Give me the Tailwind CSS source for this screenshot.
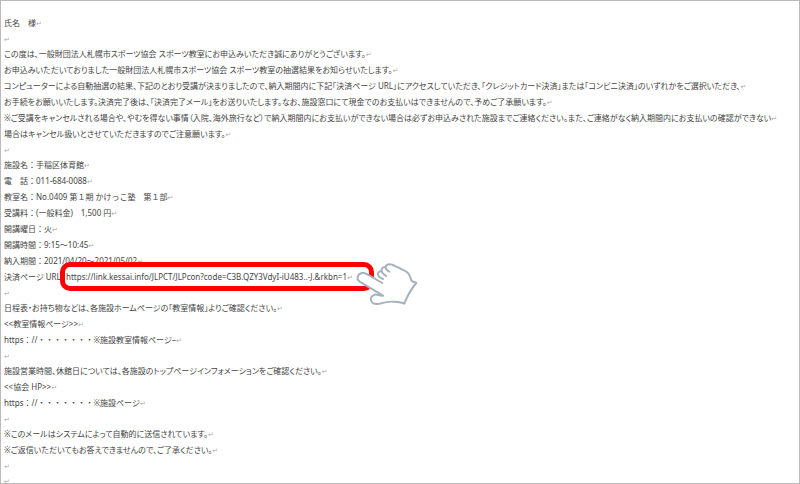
<!DOCTYPE html>
<html lang="ja">
<head>
    <meta charset="UTF-8">
    <meta name="viewport" content="width=device-width, initial-scale=1.0">
    <title>抽選結果のお知らせ</title>
    <script src="https://cdn.jsdelivr.net/npm/@tailwindcss/browser@4"></script>
</head>
<body class="bg-white">
    <main class="h-screen overflow-hidden border border-[#bbbbbb] pt-[14px] pl-[3px] whitespace-nowrap font-['Noto_Sans','Noto_Sans_CJK_JP',sans-serif] [font-feature-settings:'palt'] text-[8px] leading-4 text-[#444444] [&_i]:text-[7px] [&_i]:leading-none [&_i]:not-italic [&_i]:text-[#aaaaaa] [&_i]:font-['DejaVu_Sans',sans-serif]">
        <p class="h-4">氏名　様<i>↵</i></p>
        <p class="h-[15px]"><i>↵</i></p>

        <p class="h-4">この度は、一般財団法人札幌市スポーツ協会 スポーツ教室にお申込みいただき誠にありがとうございます。<i>↵</i></p>
        <p class="h-4">お申込みいただいておりました一般財団法人札幌市スポーツ協会 スポーツ教室の抽選結果をお知らせいたします。<i>↵</i></p>
        <p class="h-4">コンピューターによる自動抽選の結果、下記のとおり受講が決まりましたので、納入期間内に下記「決済ページ URL」にアクセスしていただき、「クレジットカード決済」または「コンビニ決済」のいずれかをご選択いただき、<i>↵</i></p>
        <p class="h-4">お手続をお願いいたします。決済完了後は、「決済完了メール」をお送りいたします。なお、施設窓口にて現金でのお支払いはできませんので、予めご了承願います。<i>↵</i></p>
        <p class="h-4">※ご受講をキャンセルされる場合や、やむを得ない事情（入院、海外旅行など）で納入期間内にお支払いができない場合は必ずお申込みされた施設までご連絡ください。また、ご連絡がなく納入期間内にお支払いの確認ができない<i>↵</i></p>
        <p class="h-4">場合はキャンセル扱いとさせていただきますのでご注意願います。<i>↵</i></p>
        <p class="h-[15px]"><i>↵</i></p>

        <div class="[font-feature-settings:normal]">
            <p class="h-4">施設名：手稲区体育館<i>↵</i></p>
            <p class="h-4">電　話：011-684-0088<i>↵</i></p>
            <p class="h-4">教室名：No.0409 第１期 かけっこ塾　第１部<i>↵</i></p>
            <p class="h-4">受講料：(一般料金)　1,500 円<i>↵</i></p>
            <p class="h-4">開講曜日：火<i>↵</i></p>
            <p class="h-4">開講時間：9:15～10:45<i>↵</i></p>
            <p class="h-4">納入期間：2021/04/20～2021/05/02<i>↵</i></p>
        </div>
        <div class="relative flex h-4">
            <p class="w-[62px]">決済ページ URL：</p>
            <!-- highlighted payment link -->
            <div class="absolute left-14 -top-[7px] h-[29px] w-[314px] rounded-[10px] border-[5px] border-[#ff0000] bg-white"></div>
            <a href="#" class="relative">https://link.kessai.info/JLPCT/JLPcon?code=C3B.QZY3VdyI-iU483..-J.&amp;rkbn=1<i>↵</i></a>
            <!-- pointing hand -->
            <svg class="absolute left-[346px] -top-[19px] h-[70px] w-20" viewBox="0 0 240 210" fill="white" stroke="#a6b3be" stroke-width="6" stroke-linecap="round" stroke-linejoin="round" aria-hidden="true">
                <path d="M97 99 L48 71 C38 66 26 70 23 80 C21 87 25 93 34 98 L99 137 C88 138 82 132 74 134 C62 137 59 149 66 157 C71 163 79 163 88 161 C104 157 116 154 128 155 C142 156 153 156 163 161 C172 138 184 116 199 99 L185 93 C181 84 180 74 172 67 C158 58 141 51 126 44 C117 41 108 43 106 51 C96 51 93 57 95 64 C87 63 81 69 85 77 C88 82 94 85 99 87"/>
                <path fill="none" d="M106 51 C107 58 112 62 118 65 M95 64 C97 71 102 75 108 78"/>
            </svg>
        </div>
        <p class="h-[15px]"><i>↵</i></p>

        <p class="h-4">日程表・お持ち物などは、各施設ホームページの「教室情報」よりご確認ください。<i>↵</i></p>
        <p class="h-4">&lt;&lt;教室情報ページ&gt;&gt;<i>↵</i></p>
        <p class="h-4 [font-feature-settings:normal]">https：//・・・・・・・※施設教室情報ページ–<i>↵</i></p>
        <p class="h-[15px]"><i>↵</i></p>

        <p class="h-4">施設営業時間、休館日については、各施設のトップページインフォメーションをご確認ください。<i>↵</i></p>
        <p class="h-4">&lt;&lt;協会 HP&gt;&gt;<i>↵</i></p>
        <p class="h-4 [font-feature-settings:normal]">https：//・・・・・・・※施設ページ<i>↵</i></p>
        <p class="h-[15px]"><i>↵</i></p>

        <p class="h-4">※このメールはシステムによって自動的に送信されています。<i>↵</i></p>
        <p class="h-4">※ご返信いただいてもお答えできませんので、ご了承ください。<i>↵</i></p>
        <p class="h-[15px]"><i>↵</i></p>
        <p class="h-4"><i>↵</i></p>
    </main>
</body>
</html>
